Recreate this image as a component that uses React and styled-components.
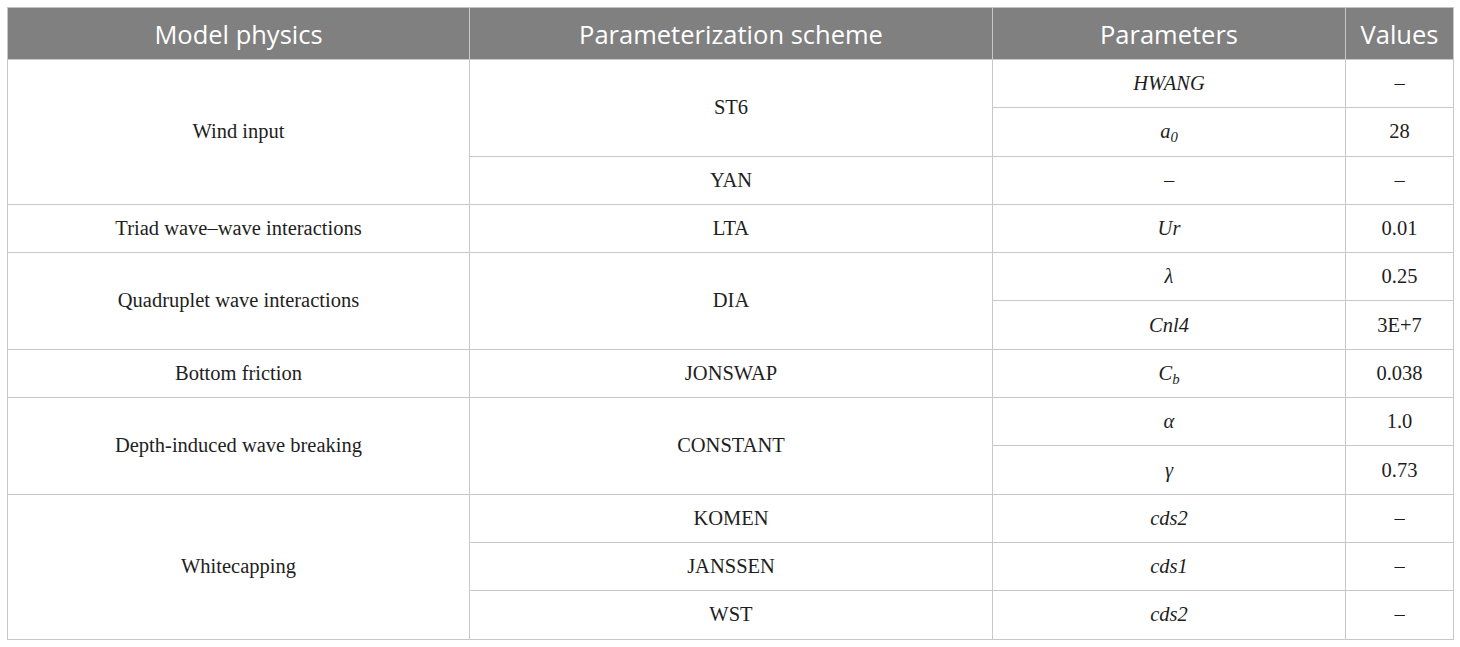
import React from "react";
import styled, { createGlobalStyle } from "styled-components";

const Global = createGlobalStyle`
  html, body { margin: 0; padding: 0; background: #ffffff; }
  body { padding: 7px 0 0 7px; }
`;

const Table = styled.table`
  border-collapse: collapse;
  table-layout: fixed;
  width: 1446px;
  font-family: "Liberation Serif", "Times New Roman", serif;
  color: #1e1e1e;
`;

const HeadCell = styled.th`
  background: #808080;
  color: #ffffff;
  font-family: "Open Sans", "Noto Sans", sans-serif;
  font-weight: 400;
  font-size: 25.5px;
  height: 51px;
  padding: 0 4px;
  text-align: center;
  border: 1px solid #c8c8c8;
  border-top-color: #c3c3c3;
`;

const Cell = styled.td`
  height: 47.3px;
  padding: 0 8px;
  text-align: center;
  vertical-align: middle;
  font-size: 20.5px;
  border: 1px solid #c8c8c8;
`;

const Sub = styled.sub`
  font-size: 0.72em;
  vertical-align: -0.3em;
  line-height: 0;
`;

const rows = [
  { group: "Wind input", span: 3, scheme: "ST6", sspan: 2, param: <i>HWANG</i>, value: "–" },
  { param: <i>a<Sub>0</Sub></i>, value: "28" },
  { scheme: "YAN", sspan: 1, param: "–", value: "–" },
  { group: "Triad wave–wave interactions", span: 1, scheme: "LTA", sspan: 1, param: <i>Ur</i>, value: "0.01" },
  { group: "Quadruplet wave interactions", span: 2, scheme: "DIA", sspan: 2, param: <i>λ</i>, value: "0.25" },
  { param: <i>Cnl4</i>, value: "3E+7" },
  { group: "Bottom friction", span: 1, scheme: "JONSWAP", sspan: 1, param: <i>C<Sub>b</Sub></i>, value: "0.038" },
  { group: "Depth-induced wave breaking", span: 2, scheme: "CONSTANT", sspan: 2, param: <i>α</i>, value: "1.0" },
  { param: <i>γ</i>, value: "0.73" },
  { group: "Whitecapping", span: 3, scheme: "KOMEN", sspan: 1, param: <i>cds2</i>, value: "–" },
  { scheme: "JANSSEN", sspan: 1, param: <i>cds1</i>, value: "–" },
  { scheme: "WST", sspan: 1, param: <i>cds2</i>, value: "–" },
];

export default function App() {
  return (
    <>
      <Global />
      <Table>
        <colgroup>
          <col style={{ width: 462 }} />
          <col style={{ width: 523 }} />
          <col style={{ width: 353 }} />
          <col style={{ width: 108 }} />
        </colgroup>
        <thead>
          <tr>
            <HeadCell>Model physics</HeadCell>
            <HeadCell>Parameterization scheme</HeadCell>
            <HeadCell>Parameters</HeadCell>
            <HeadCell>Values</HeadCell>
          </tr>
        </thead>
        <tbody>
          {rows.map((r, i) => (
            <tr key={i}>
              {r.group && <Cell rowSpan={r.span}>{r.group}</Cell>}
              {r.scheme && <Cell rowSpan={r.sspan}>{r.scheme}</Cell>}
              <Cell>{r.param}</Cell>
              <Cell>{r.value}</Cell>
            </tr>
          ))}
        </tbody>
      </Table>
    </>
  );
}
